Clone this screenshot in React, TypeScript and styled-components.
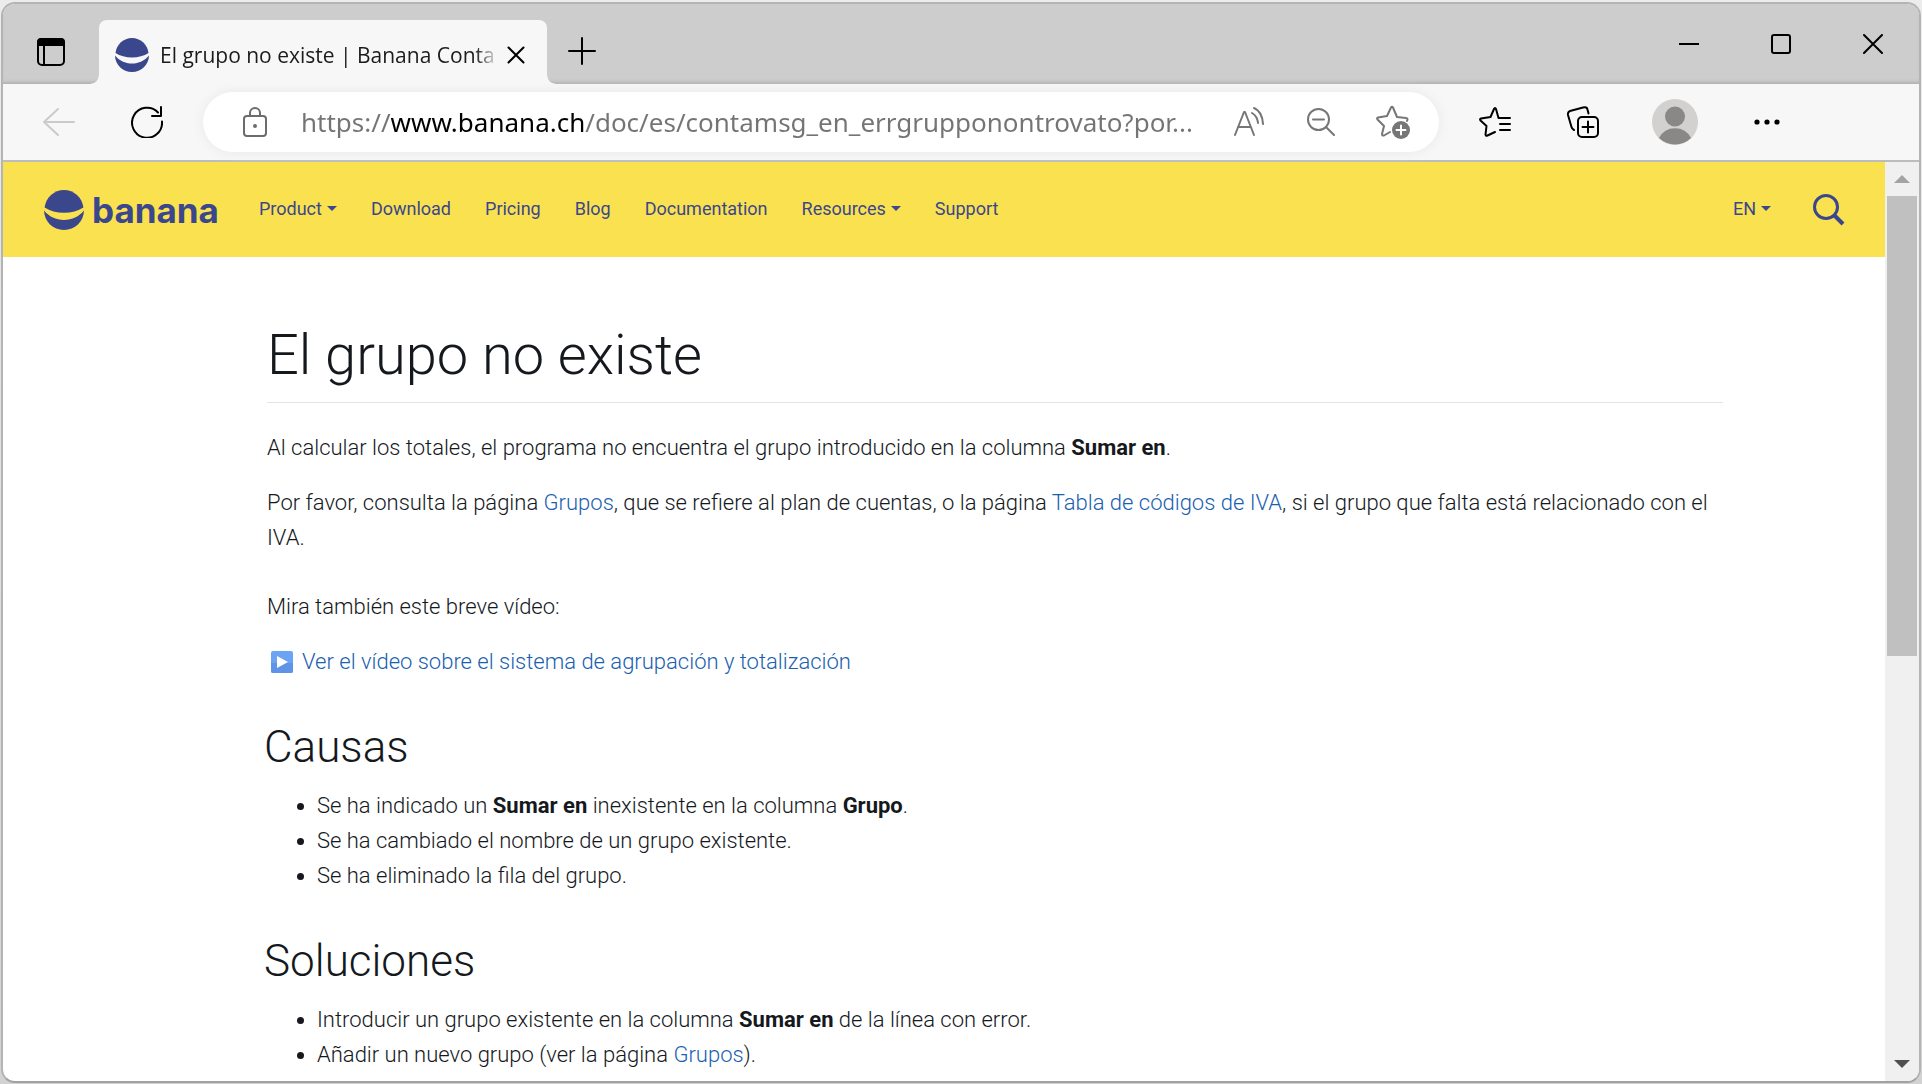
import React from "react";
import styled, { createGlobalStyle } from "styled-components";

const chromeFont = `"Noto Sans", "Open Sans", sans-serif`;
const siteFont = `Roboto, "Liberation Sans", sans-serif`;
const brandBlue = "#3a478d";
const linkBlue = "#1a5fb0";

const GlobalStyle = createGlobalStyle`
  * { box-sizing: border-box; }
  body {
    margin: 0;
    background: linear-gradient(#ececec, #d2d2d2);
    font-family: ${siteFont};
  }
  button {
    padding: 0;
    border: 0;
    background: none;
    color: inherit;
    font: inherit;
    cursor: pointer;
  }
  svg { display: block; }
`;

const Window = styled.div`
  display: flex;
  flex-direction: column;
  height: calc(100vh - 3px);
  margin: 2px 1px 1px;
  border: 2px solid #b4b4b4;
  border-bottom-color: #a2a2a2;
  border-radius: 14px;
  background: #fff;
  overflow: hidden;
`;

const TabStrip = styled.div`
  display: flex;
  align-items: flex-end;
  flex: none;
  height: 80px;
  padding-left: 16px;
  background: #cdcdcd;
  box-shadow: inset 0 -4px 4px -3px #a4a4a4;
`;

const IconButton = styled.button<{ $w: number; $h?: number; $tone?: string }>`
  display: grid;
  place-items: center;
  flex: none;
  width: ${(p) => p.$w}px;
  height: ${(p) => p.$h ?? 60}px;
  color: ${(p) => p.$tone ?? "#000"};
`;

const Tab = styled.div`
  position: relative;
  display: flex;
  align-items: center;
  flex: none;
  width: 448px;
  height: 64px;
  margin-left: 16px;
  padding: 6px 14px 0 16px;
  border-radius: 8px 8px 0 0;
  background: #f7f7f7;
  &::before,
  &::after {
    content: "";
    position: absolute;
    bottom: 0;
    width: 8px;
    height: 8px;
  }
  &::before {
    left: -8px;
    background: radial-gradient(circle at 0 0, transparent 7px, #f7f7f7 8px);
  }
  &::after {
    right: -8px;
    background: radial-gradient(circle at 100% 0, transparent 7px, #f7f7f7 8px);
  }
`;

const TabTitle = styled.span`
  flex: 1;
  min-width: 0;
  margin-left: 11px;
  white-space: nowrap;
  font: 400 21px/30px "Open Sans", sans-serif;
  color: #1b1b1b;
  mask-image: linear-gradient(90deg, #000 calc(100% - 24px), transparent);
`;

const WindowControls = styled.div`
  display: flex;
  align-self: flex-start;
  margin-left: auto;
`;

const Toolbar = styled.div`
  display: flex;
  align-items: center;
  flex: none;
  height: 78px;
  padding: 0 112px 0 12px;
  border-bottom: 2px solid #bcbcbc;
  background: #f7f7f7;
`;

const AddressBar = styled.form`
  display: flex;
  align-items: center;
  flex: 1;
  min-width: 0;
  height: 60px;
  margin: 0 8px 0 12px;
  padding: 0 10px 0 22px;
  border-radius: 30px;
  background: #fff;
  box-shadow: 0 0 10px 2px #ececec;
`;

const AddressInput = styled.input`
  flex: 1;
  min-width: 0;
  height: 44px;
  margin: 0 0 0 16px;
  padding: 0;
  border: 0;
  outline: 0;
  font: 400 26px/44px ${chromeFont};
  color: #6f6f6f;
  text-overflow: ellipsis;
  background: linear-gradient(90deg, #747474 90px, #000 90px 284px, #747474 284px);
  background-clip: text;
  -webkit-background-clip: text;
  -webkit-text-fill-color: transparent;
`;

const Viewport = styled.div`
  display: flex;
  flex: 1;
  min-height: 0;
`;

const Page = styled.div`
  flex: 1;
  min-width: 0;
  overflow: hidden;
`;

const SiteHeader = styled.header`
  display: flex;
  align-items: center;
  height: 95px;
  padding: 0 32px 0 41px;
  background: #fae150;
  color: ${brandBlue};
`;

const Brand = styled.a`
  display: flex;
  align-items: center;
  gap: 8px;
  color: inherit;
  font: 700 35px/44px Inter, sans-serif;
  text-decoration: none;
`;

const Nav = styled.nav`
  display: flex;
  flex: 1;
  gap: 34px;
  margin-left: 40px;
`;

const navText = `
  display: flex;
  align-items: center;
  gap: 5px;
  padding-bottom: 2px;
  color: ${brandBlue};
  font: 400 18px/24px ${siteFont};
  text-decoration: none;
`;
const NavLink = styled.a`${navText}`;
const NavButton = styled.button`&&{${navText}}`;

const Caret = styled.span`
  border: 5px solid transparent;
  border-top-color: currentColor;
  border-bottom: 0;
`;

const SiteTools = styled.div`
  display: flex;
  align-items: center;
  gap: 34px;
`;

const Article = styled.main`
  margin: 0 162px 0 264px;
  padding-top: 64px;
  color: #15191d;
  font: 300 22px/35px ${siteFont};
`;

const Title = styled.h1`
  margin: 0 0 27px;
  padding-bottom: 13px;
  border-bottom: 1px solid #e4e4e4;
  font-size: 56px;
  line-height: 68px;
  font-weight: 300;
`;

const Paragraph = styled.p<{ $spaced?: boolean }>`
  margin: ${(p) => (p.$spaced ? 34 : 0)}px 0 20px;
`;

const Section = styled.h2`
  margin: 42px 0 15px -3px;
  font-size: 44px;
  line-height: 52px;
  font-weight: 300;
`;

const List = styled.ul`
  margin: 0;
  padding-left: 50px;
`;

const Link = styled.a`
  color: ${linkBlue};
  text-decoration: none;
`;

const VideoLink = styled(Link)`
  display: inline-flex;
  align-items: center;
  gap: 9px;
  padding-left: 4px;
  vertical-align: top;
`;

const Strong = styled.strong`
  font-weight: 700;
`;

const ScrollBar = styled.div`
  display: flex;
  flex-direction: column;
  flex: none;
  width: 34px;
  background: #f0f0f0;
`;

const ScrollTrack = styled.div`
  flex: 1;
  padding: 0 2px;
`;

const ScrollThumb = styled.div`
  height: 54%;
  background: #c0c0c0;
`;

const BananaMark = ({ size }: { size: number }) => (
  <svg width={size} height={size} viewBox="0 0 40 40" fill={brandBlue} aria-hidden="true">
    <path d="M.6 17.500C1.800 7.500 10 0 20 0s18.200 7.500 19.400 17.500C34 21 27.500 22.800 20 22.800S6 21 .6 17.500Z" />
    <path d="M0 20.500c5 6 12 9.500 20 9.500s15-3.500 20-9.500C39.700 31.500 31 40 20 40S.3 31.500 0 20.500Z" />
  </svg>
);

type IconProps = { w: number; h?: number; sw?: number; children: React.ReactNode };
const Icon = ({ w, h = w, sw = 2, children }: IconProps) => (
  <svg
    width={w}
    height={h}
    viewBox={`0 0 ${w} ${h}`}
    fill="none"
    stroke="currentColor"
    strokeWidth={sw}
    strokeLinecap="round"
    strokeLinejoin="round"
    aria-hidden="true"
  >
    {children}
  </svg>
);

export default function App() {
  return (
    <>
      <GlobalStyle />
      <Window>
        <TabStrip>
          <IconButton $w={64} $h={64} aria-label="Tab actions">
            <Icon w={28}>
              <rect x="1" y="1" width="26" height="26" rx="4" />
              <path d="M1 7V4q0-3 3-3h20q3 0 3 3v3Z" fill="currentColor" />
              <path d="M7 8v19" />
            </Icon>
          </IconButton>
          <Tab>
            <BananaMark size={34} />
            <TabTitle>El grupo no existe | Banana Conta</TabTitle>
            <IconButton $w={34} $h={34} aria-label="Close tab">
              <Icon w={18}>
                <path d="M1.500 1.500l15 15M16.500 1.500l-15 15" />
              </Icon>
            </IconButton>
          </Tab>
          <IconButton $w={70} $h={66} aria-label="New tab">
            <Icon w={28}>
              <path d="M14 1v26M1 14h26" />
            </Icon>
          </IconButton>
          <WindowControls>
            <IconButton $w={92} $h={80} aria-label="Minimize">
              <Icon w={20}>
                <path d="M0 10h20" strokeLinecap="butt" />
              </Icon>
            </IconButton>
            <IconButton $w={92} $h={80} aria-label="Maximize">
              <Icon w={20}>
                <rect x="1" y="1" width="18" height="18" rx="2" />
              </Icon>
            </IconButton>
            <IconButton $w={92} $h={80} aria-label="Close window">
              <Icon w={20}>
                <path d="M1 1l18 18M19 1L1 19" />
              </Icon>
            </IconButton>
          </WindowControls>
        </TabStrip>

        <Toolbar>
          <IconButton $w={88} $tone="#cbcbcb" aria-label="Back">
            <Icon w={32} h={28}>
              <path d="M31 14H1M15 1L1 14l14 13" />
            </Icon>
          </IconButton>
          <IconButton $w={88} aria-label="Reload">
            <Icon w={32}>
              <path d="M31 15.500A15 15 0 1 1 27 6.500M30 1v9h-9" />
            </Icon>
          </IconButton>
          <AddressBar onSubmit={(e) => e.preventDefault()}>
            <IconButton type="button" $w={60} $tone="#6c6c6c" aria-label="Site information">
              <Icon w={24} h={30}>
                <rect x="1" y="9" width="22" height="20" rx="3" />
                <path d="M7 9V6a5 5 0 0 1 10 0v3" />
                <circle cx="12" cy="19" r="1" fill="currentColor" />
              </Icon>
            </IconButton>
            <AddressInput
              aria-label="Address"
              defaultValue="https://www.banana.ch/doc/es/contamsg_en_errgrupponontrovato?por..."
            />
            <IconButton type="button" $w={72} $tone="#767676" aria-label="Read aloud">
              <Icon w={30} h={30}>
                <path d="M1 28L10 5h1l9 23M4 20h13M20 1c5 2 8.500 8 9 16M18 6c3.500 2 5.500 5 6 10" />
              </Icon>
            </IconButton>
            <IconButton type="button" $w={72} $tone="#767676" aria-label="Zoom out">
              <Icon w={28}>
                <circle cx="11.500" cy="11.500" r="10.500" />
                <path d="M19 19l8 8M6 11.500h11" />
              </Icon>
            </IconButton>
            <IconButton type="button" $w={72} $tone="#767676" aria-label="Add to favorites">
              <Icon w={34}>
                <path d="M31 16l.5-1.500q0-1.500-1.500-1.500l-9-1-4-9.500q-1-1.500-2 0L11 11l-9 1.500q-1.500.5-.5 2L8 21 6 29q0 2 2 1.500l6-3.500" />
                <circle cx="25" cy="25" r="9" fill="currentColor" stroke="none" />
                <path d="M25 20.500v9M20.500 25h9" stroke="#fff" />
              </Icon>
            </IconButton>
          </AddressBar>
          <IconButton $w={96} aria-label="Favorites">
            <Icon w={32} h={30}>
              <path d="M31 11H19.500L17 2q-1-2-2 0l-3.500 8L2 11.500q-1.500.5-.5 2l6 5.500-1 8.500q.5 2 2 1L16 25M21 17h10M21 23h10" />
            </Icon>
          </IconButton>
          <IconButton $w={80} aria-label="Collections">
            <Icon w={32}>
              <rect x="11" y="11" width="20" height="20" rx="4" />
              <path d="M21 15.500v11M15.500 21h11M7 24q-2-1-2.500-3L1 9q-.5-3 2-4L16 1.500q4-1 4.500 2l1 4" />
            </Icon>
          </IconButton>
          <IconButton $w={104} aria-label="Profile">
            <svg width="46" height="46" viewBox="0 0 46 46" aria-hidden="true">
              <circle cx="23" cy="23" r="23" fill="#d2d1cf" />
              <circle cx="23" cy="17.500" r="10" fill="#8a8886" />
              <path d="M7 39a18 18 0 0 1 32 0 23 23 0 0 1-32 0Z" fill="#8a8886" />
            </svg>
          </IconButton>
          <IconButton $w={80} aria-label="Settings and more">
            <Icon w={26} h={6}>
              <g fill="currentColor" stroke="none">
                <circle cx="3" cy="3" r="2.600" />
                <circle cx="13" cy="3" r="2.600" />
                <circle cx="23" cy="3" r="2.600" />
              </g>
            </Icon>
          </IconButton>
        </Toolbar>

        <Viewport>
          <Page>
            <SiteHeader>
              <Brand href="#">
                <BananaMark size={40} />
                banana
              </Brand>
              <Nav>
                <NavButton>Product<Caret /></NavButton>
                <NavLink href="#">Download</NavLink>
                <NavLink href="#">Pricing</NavLink>
                <NavLink href="#">Blog</NavLink>
                <NavLink href="#">Documentation</NavLink>
                <NavButton>Resources<Caret /></NavButton>
                <NavLink href="#">Support</NavLink>
              </Nav>
              <SiteTools>
                <NavButton>EN<Caret /></NavButton>
                <IconButton $w={48} $tone={brandBlue} aria-label="Search">
                  <Icon w={32} sw={3}>
                    <circle cx="13" cy="13" r="11.500" />
                    <path d="M21.500 21.500l8.500 8.500" strokeWidth="4" strokeLinecap="butt" />
                  </Icon>
                </IconButton>
              </SiteTools>
            </SiteHeader>

            <Article>
              <Title>El grupo no existe</Title>
              <Paragraph>
                Al calcular los totales, el programa no encuentra el grupo introducido en la columna{" "}
                <Strong>Sumar en</Strong>.
              </Paragraph>
              <Paragraph>
                Por favor, consulta la página <Link href="#">Grupos</Link>, que se refiere al plan de
                cuentas, o la página <Link href="#">Tabla de códigos de IVA</Link>, si el grupo que
                falta está relacionado con el IVA.
              </Paragraph>
              <Paragraph $spaced>Mira también este breve vídeo:</Paragraph>
              <Paragraph>
                <VideoLink href="#">
                  <svg width="22" height="22" viewBox="0 0 22 22" aria-hidden="true">
                    <rect width="22" height="22" rx="2" fill="#6ba4f2" />
                    <path d="M0 12h22v8q0 2-2 2H2q-2 0-2-2Z" fill="#5f93e6" />
                    <path d="M6 5l11 6-11 6Z" fill="#fff" />
                  </svg>
                  Ver el vídeo sobre el sistema de agrupación y totalización
                </VideoLink>
              </Paragraph>

              <Section>Causas</Section>
              <List>
                <li>
                  Se ha indicado un <Strong>Sumar en</Strong> inexistente en la columna{" "}
                  <Strong>Grupo</Strong>.
                </li>
                <li>Se ha cambiado el nombre de un grupo existente.</li>
                <li>Se ha eliminado la fila del grupo.</li>
              </List>

              <Section>Soluciones</Section>
              <List>
                <li>
                  Introducir un grupo existente en la columna <Strong>Sumar en</Strong> de la línea
                  con error.
                </li>
                <li>
                  Añadir un nuevo grupo (ver la página <Link href="#">Grupos</Link>).
                </li>
              </List>
            </Article>
          </Page>

          <ScrollBar>
            <IconButton $w={34} $h={34} $tone="#a3a3a3" aria-label="Scroll up">
              <svg width="16" height="8" viewBox="0 0 16 8" fill="currentColor" aria-hidden="true">
                <path d="M0 8l8-8 8 8Z" />
              </svg>
            </IconButton>
            <ScrollTrack>
              <ScrollThumb />
            </ScrollTrack>
            <IconButton $w={34} $h={34} $tone="#505050" aria-label="Scroll down">
              <svg width="16" height="8" viewBox="0 0 16 8" fill="currentColor" aria-hidden="true">
                <path d="M0 0l8 8 8-8Z" />
              </svg>
            </IconButton>
          </ScrollBar>
        </Viewport>
      </Window>
    </>
  );
}
